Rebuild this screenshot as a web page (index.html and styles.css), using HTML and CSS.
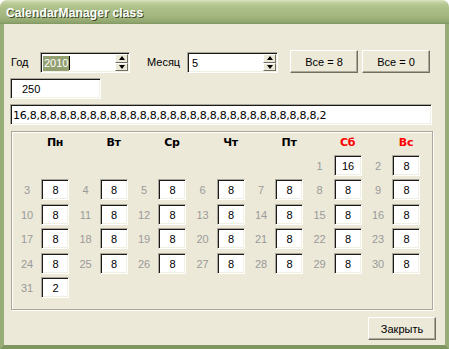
FILE: index.html
```html
<!DOCTYPE html>
<html>
<head>
<meta charset="utf-8">
<title>CalendarManager class</title>
<link rel="stylesheet" href="styles.css">
</head>
<body>
<div class="window">
  <div class="titlebar"><span class="title">CalendarManager class</span></div>
  <div class="client">
    <div class="toprow">
      <span class="lbl lbl-year">Год</span>
      <div class="spin spin-year">
        <div class="spin-val"><span class="sel">2010</span><span class="caret"></span></div>
        <div class="arrows"><span class="arr up"></span><span class="arr dn"></span></div>
      </div>
      <span class="lbl lbl-month">Месяц</span>
      <div class="spin spin-month">
        <div class="spin-val"><span class="plain">5</span></div>
        <div class="arrows"><span class="arr up"></span><span class="arr dn"></span></div>
      </div>
      <button class="btn btn-all8">Все = 8</button>
      <button class="btn btn-all0">Все = 0</button>
    </div>
    <div class="edit hours">250</div>
    <div class="edit list">16,8,8,8,8,8,8,8,8,8,8,8,8,8,8,8,8,8,8,8,8,8,8,8,8,8,8,8,8,8,2</div>
    <div class="group">
      <div class="heads">
        <span class="head">Пн</span>
        <span class="head">Вт</span>
        <span class="head">Ср</span>
        <span class="head">Чт</span>
        <span class="head">Пт</span>
        <span class="head weekend">Сб</span>
        <span class="head weekend">Вс</span>
      </div>
      <div class="days">
        <div class="cell first"><span class="num">1</span><span class="box">16</span></div>
        <div class="cell"><span class="num">2</span><span class="box">8</span></div>
        <div class="cell"><span class="num">3</span><span class="box">8</span></div>
        <div class="cell"><span class="num">4</span><span class="box">8</span></div>
        <div class="cell"><span class="num">5</span><span class="box">8</span></div>
        <div class="cell"><span class="num">6</span><span class="box">8</span></div>
        <div class="cell"><span class="num">7</span><span class="box">8</span></div>
        <div class="cell"><span class="num">8</span><span class="box">8</span></div>
        <div class="cell"><span class="num">9</span><span class="box">8</span></div>
        <div class="cell"><span class="num">10</span><span class="box">8</span></div>
        <div class="cell"><span class="num">11</span><span class="box">8</span></div>
        <div class="cell"><span class="num">12</span><span class="box">8</span></div>
        <div class="cell"><span class="num">13</span><span class="box">8</span></div>
        <div class="cell"><span class="num">14</span><span class="box">8</span></div>
        <div class="cell"><span class="num">15</span><span class="box">8</span></div>
        <div class="cell"><span class="num">16</span><span class="box">8</span></div>
        <div class="cell"><span class="num">17</span><span class="box">8</span></div>
        <div class="cell"><span class="num">18</span><span class="box">8</span></div>
        <div class="cell"><span class="num">19</span><span class="box">8</span></div>
        <div class="cell"><span class="num">20</span><span class="box">8</span></div>
        <div class="cell"><span class="num">21</span><span class="box">8</span></div>
        <div class="cell"><span class="num">22</span><span class="box">8</span></div>
        <div class="cell"><span class="num">23</span><span class="box">8</span></div>
        <div class="cell"><span class="num">24</span><span class="box">8</span></div>
        <div class="cell"><span class="num">25</span><span class="box">8</span></div>
        <div class="cell"><span class="num">26</span><span class="box">8</span></div>
        <div class="cell"><span class="num">27</span><span class="box">8</span></div>
        <div class="cell"><span class="num">28</span><span class="box">8</span></div>
        <div class="cell"><span class="num">29</span><span class="box">8</span></div>
        <div class="cell"><span class="num">30</span><span class="box">8</span></div>
        <div class="cell"><span class="num">31</span><span class="box">2</span></div>
      </div>
    </div>
    <div class="footer"><button class="btn btn-close">Закрыть</button></div>
  </div>
</div>
</body>
</html>
```

FILE: styles.css
```css
* { box-sizing: border-box; }

html, body {
  margin: 0;
  padding: 0;
  background: #ffffff;
}

body {
  font-family: "Liberation Sans", Arial, sans-serif;
  font-size: 11px;
  color: #000;
}

.window {
  width: 449px;
  height: 349px;
  display: flex;
  flex-direction: column;
  border-radius: 7px 7px 0 0;
  overflow: hidden;
  background: #ECE9D8;
}

.titlebar {
  height: 24px;
  flex: none;
  background: linear-gradient(to bottom,
    #dbe4c2 0px, #c5d3a6 2px, #b4c690 5px, #aabd86 10px,
    #a3b77f 16px, #98ad75 20px, #8ba16a 23px, #7d935e 24px);
  padding-left: 6px;
  display: flex;
  align-items: center;
}

.title {
  color: #ffffff;
  font-family: "Liberation Sans", Arial, sans-serif;
  font-weight: bold;
  font-size: 12px;
  letter-spacing: 0.15px;
  text-shadow: 1px 1px 0 #3b4a26;
  padding-top: 1px;
}

.client {
  flex: 1;
  display: flex;
  flex-direction: column;
  align-items: flex-start;
  border-left: 4px solid #97ac77;
  border-right: 4px solid #97ac77;
  border-bottom: 4px solid #7f9661;
  padding-left: 6px;
  padding-right: 9px;
}

/* top row */
.toprow {
  display: flex;
  align-items: flex-end;
  height: 23px;
  margin-top: 26px;
}

.lbl {
  align-self: center;
  padding-top: 1px;
}

.lbl-year {
  width: 30px;
  padding-left: 1px;
}

.lbl-month {
  width: 40px;
  margin-left: 17px;
}

.spin,
.edit,
.box {
  background: #ffffff;
  border: 1px solid;
  border-color: #aca899 #ffffff #ffffff #aca899;
  box-shadow: inset 1px 1px 0 #1a1a1a, inset -1px -1px 0 #f1efe2;
}

.spin {
  height: 21px;
  display: flex;
}

.spin-year { width: 90px; }
.spin-month { width: 91px; }

.spin-val {
  flex: 1;
  display: flex;
  align-items: center;
  padding-left: 2px;
  padding-top: 1px;
}

.sel {
  background: #93a070;
  color: #ffffff;
  height: 15px;
  line-height: 15px;
  padding: 0 1px;
}

.caret {
  width: 1px;
  height: 14px;
  background: #000;
}

.plain {
  padding-left: 2px;
}

.arrows {
  width: 13px;
  display: flex;
  flex-direction: column;
  margin: 1px 1px 1px 0;
}

.arr {
  flex: 1;
  display: flex;
  align-items: center;
  justify-content: center;
  background: #ece9d8;
  border: 1px solid;
  border-color: #ffffff #716f64 #716f64 #ffffff;
}

.arr.up::after {
  content: "";
  border-left: 3px solid transparent;
  border-right: 3px solid transparent;
  border-bottom: 4px solid #000;
}

.arr.dn::after {
  content: "";
  border-left: 3px solid transparent;
  border-right: 3px solid transparent;
  border-top: 4px solid #000;
}

/* buttons */
.btn {
  width: 68px;
  height: 23px;
  padding: 0;
  margin: 0;
  background: #ece9d8;
  border: 1px solid;
  border-color: #ffffff #716f64 #716f64 #ffffff;
  box-shadow: inset -1px -1px 0 #aca899;
  font-family: "Liberation Sans", Arial, sans-serif;
  font-size: 11px;
  color: #000;
}

.btn-all8 { margin-left: 12px; }
.btn-all0 { margin-left: 4px; }

/* edits */
.edit {
  height: 21px;
  display: flex;
  align-items: center;
  padding-top: 1px;
}

.hours {
  width: 91px;
  margin-top: 5px;
  padding-left: 11px;
}

.list {
  width: 422px;
  margin-top: 5px;
  padding-left: 2px;
  font-family: "DejaVu Sans", sans-serif;
  font-size: 11px;
  letter-spacing: -0.25px;
}

/* group box */
.group {
  width: 422px;
  height: 179px;
  margin-top: 6px;
  margin-left: 1px;
  border: 1px solid #aca899;
  box-shadow: 1px 1px 0 #ffffff, inset 1px 1px 0 #ffffff;
  padding-left: 5px;
}

.heads {
  display: grid;
  grid-template-columns: repeat(7, 58.5px);
  height: 23px;
}

.head {
  margin-left: 24px;
  width: 28px;
  text-align: center;
  line-height: 21px;
  font-weight: bold;
  font-family: "DejaVu Sans", sans-serif;
  font-size: 11px;
  letter-spacing: -0.3px;
}

.head.weekend { color: #ff0000; }

.days {
  display: grid;
  grid-template-columns: repeat(7, 58.5px);
  grid-auto-rows: 21px;
  row-gap: 3.4px;
}

.cell {
  display: flex;
  align-items: center;
}

.cell.first { grid-column-start: 6; }

.num {
  width: 20px;
  margin-right: 4px;
  text-align: center;
  color: #9a9a9a;
  padding-top: 1px;
}

.box {
  width: 28px;
  height: 21px;
  text-align: center;
  line-height: 20px;
  padding-left: 1px;
}

/* footer */
.footer {
  align-self: stretch;
  display: flex;
  justify-content: flex-end;
  margin-top: 7px;
}
```
